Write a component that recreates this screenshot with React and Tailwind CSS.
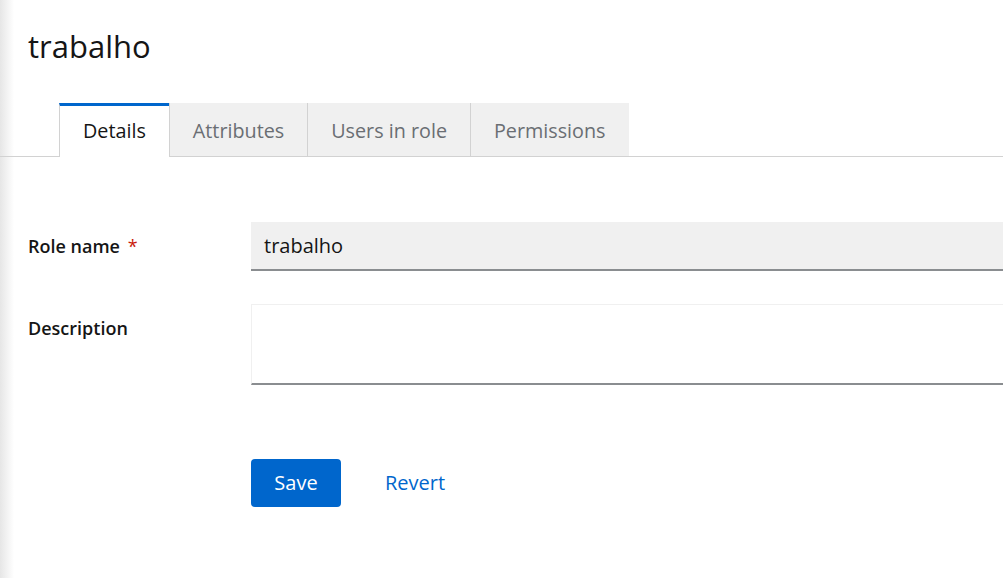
export default function App() {
  const tabs = ['Details', 'Attributes', 'Users in role', 'Permissions'];
  return (
    <div className="relative min-h-screen bg-white overflow-hidden" style={{ fontFamily: '"Open Sans", "Liberation Sans", sans-serif' }}>
      {/* sidebar shadow */}
      <div className="absolute left-0 top-0 h-full w-[14px] bg-gradient-to-r from-[#e6e6e6] to-white" />

      <div className="relative">
        <h1 className="pl-[28px] pt-[26px] text-[31px] leading-[40px] text-[#151515]">trabalho</h1>

        <div className="mt-[37px] flex border-b border-[#d2d2d2] pl-[59px]">
          {tabs.map((t, i) => (
            <div
              key={t}
              className={
                i === 0
                  ? 'relative -mb-px h-[54px] border-t-[3px] border-l border-[#0066cc] border-l-[#d2d2d2] bg-white px-[23px] pt-[10px] text-[19.75px] text-[#151515]'
                  : 'h-[53px] border-l border-[#d2d2d2] bg-[#f0f0f0] px-[23px] pt-[13px] text-[19.75px] text-[#6a6e73]'
              }
            >
              {t}
            </div>
          ))}
        </div>

        <div className="mt-[65px] flex flex-col gap-[33px]">
          <div className="flex items-start">
            <label className="w-[251px] shrink-0 pl-[28px] pt-[11px] text-[18px] font-semibold text-[#151515]">
              Role name <span className="ml-[3px] font-normal text-[#c9190b]">*</span>
            </label>
            <div className="flex h-[49px] flex-1 items-center border-b-2 border-[#8a8d90] bg-[#f0f0f0] px-[13px] text-[20px] text-[#151515]">
              trabalho
            </div>
          </div>
          <div className="flex items-start">
            <label className="w-[251px] shrink-0 pl-[28px] pt-[11px] text-[18px] font-semibold text-[#151515]">Description</label>
            <div className="h-[81px] flex-1 border-t border-l border-[#f0f0f0] border-b-2 border-b-[#8a8d90] bg-white" />
          </div>
        </div>

        <div className="mt-[74px] flex items-center gap-[44px] pl-[251px]">
          <button className="h-[48px] w-[90px] rounded-[4px] bg-[#0066cc] text-[20px] text-white">Save</button>
          <button className="text-[20px] text-[#0066cc]">Revert</button>
        </div>
      </div>
    </div>
  );
}
